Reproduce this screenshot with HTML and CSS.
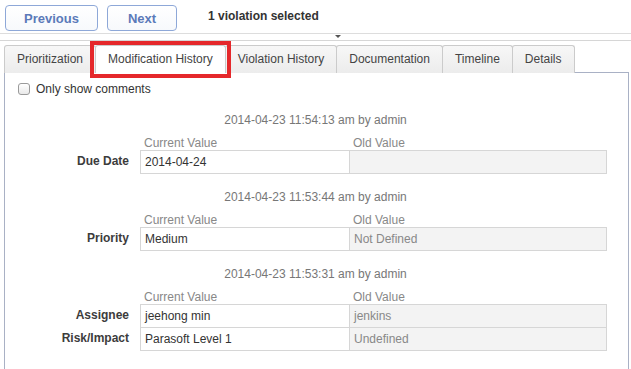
FILE: index.html
```html
<!DOCTYPE html>
<html>
<head>
<meta charset="utf-8">
<link rel="stylesheet" href="styles.css">
</head>
<body>
<div class="toolbar">
  <button class="btn btn-prev">Previous</button>
  <button class="btn btn-next">Next</button>
  <span class="selected">1 violation selected</span>
</div>
<div class="splitter"><span class="splitter-arrow"></span></div>
<div class="tabs-area">
  <div class="tabs">
    <div class="tab">Prioritization</div>
    <div class="tab active">Modification History</div>
    <div class="tab">Violation History</div>
    <div class="tab">Documentation</div>
    <div class="tab">Timeline</div>
    <div class="tab">Details</div>
  </div>
  <div class="highlight"></div>
  <div class="panel">
    <label class="filter"><input type="checkbox" class="check"><span>Only show comments</span></label>

    <div class="entry first">
      <div class="ts">2014-04-23 11:54:13 am by admin</div>
      <div class="head"><span class="h-cur">Current Value</span><span class="h-old">Old Value</span></div>
      <div class="row"><span class="lbl">Due Date</span><span class="cur">2014-04-24</span><span class="old"></span></div>
    </div>

    <div class="entry">
      <div class="ts">2014-04-23 11:53:44 am by admin</div>
      <div class="head"><span class="h-cur">Current Value</span><span class="h-old">Old Value</span></div>
      <div class="row"><span class="lbl">Priority</span><span class="cur">Medium</span><span class="old">Not Defined</span></div>
    </div>

    <div class="entry">
      <div class="ts">2014-04-23 11:53:31 am by admin</div>
      <div class="head"><span class="h-cur">Current Value</span><span class="h-old">Old Value</span></div>
      <div class="row"><span class="lbl">Assignee</span><span class="cur">jeehong min</span><span class="old">jenkins</span></div>
      <div class="row"><span class="lbl">Risk/Impact</span><span class="cur">Parasoft Level 1</span><span class="old">Undefined</span></div>
    </div>
  </div>
</div>
</body>
</html>
```

FILE: styles.css
```css
* { box-sizing: border-box; }
html, body { margin: 0; padding: 0; background: #fff; }
body {
  font-family: "Liberation Sans", Arial, Helvetica, sans-serif;
  font-size: 12px;
  color: #333;
  overflow: hidden;
}

.toolbar {
  display: flex;
  align-items: flex-start;
  padding: 5px 0 0 5px;
  height: 31px;
}
.btn {
  height: 26px;
  border: 1px solid #8ea8d8;
  border-radius: 4px;
  background: linear-gradient(#ffffff, #f7f9fc);
  color: #5b7ab9;
  font-family: "Liberation Sans", Arial, Helvetica, sans-serif;
  font-weight: bold;
  font-size: 13px;
  padding: 0;
  margin: 0;
}
.btn-prev { width: 93px; }
.btn-next { width: 70px; margin-left: 9px; }
.selected {
  margin-left: 31px;
  margin-top: 4px;
  font-weight: bold;
  color: #333;
  line-height: 14px;
}

.splitter {
  margin-top: 2px;
  height: 8px;
  border-top: 1px solid #dddddd;
  border-bottom: 1px solid #d6d6d6;
  padding-left: 335px;
}
.splitter-arrow {
  display: block;
  width: 0;
  height: 0;
  margin-top: 1px;
  border-left: 3px solid transparent;
  border-right: 3px solid transparent;
  border-top: 3px solid #555;
}

.tabs-area {
  position: relative;
  margin-top: 4px;
  padding-left: 4px;
  padding-right: 2px;
}
.tabs {
  display: flex;
  height: 27px;
  position: relative;
  z-index: 1;
}
.tab {
  height: 28px;
  line-height: 26px;
  padding: 0 12px;
  border: 1px solid #cbcbcb;
  border-bottom: none;
  border-radius: 3px 3px 0 0;
  background: linear-gradient(#f7f7f7, #ececec);
  color: #444;
  margin-right: -1px;
  white-space: nowrap;
}
.tab.active {
  background: #fff;
  padding: 0 12px;
  height: 28px;
}

.highlight {
  position: absolute;
  left: 90px;
  top: -4px;
  width: 141px;
  height: 37px;
  border: 4px solid #e5282b;
  z-index: 2;
}

.panel {
  border: 1px solid #a9b1c5;
  border-bottom: none;
  padding: 10px 0 40px 0;
}

.filter {
  display: flex;
  align-items: center;
  margin-left: 13px;
  height: 12px;
  color: #333;
}
.check {
  appearance: none;
  -webkit-appearance: none;
  width: 12px;
  height: 12px;
  margin: 0 6px 0 0;
  border: 1px solid #9a9a9a;
  border-radius: 3px;
  background: linear-gradient(#ffffff, #e9e9e9);
}

.entry { padding-top: 16px; }
.entry.first { padding-top: 18px; }
.ts {
  text-align: center;
  color: #777;
  line-height: 14px;
  padding-right: 2px;
}
.head {
  display: flex;
  margin-top: 9px;
  padding-left: 135px;
  line-height: 14px;
  color: #888;
}
.h-cur { width: 209px; padding-left: 4px; }
.h-old { padding-left: 4px; }

.row {
  display: flex;
  height: 24px;
  line-height: 22px;
}
.row + .row { margin-top: -1px; }
.lbl {
  width: 124px;
  margin-right: 11px;
  text-align: right;
  font-weight: bold;
  color: #3c3c3c;
}
.cur {
  width: 209px;
  border: 1px solid #d6d6d6;
  border-right: none;
  padding-left: 4px;
  color: #333;
  background: #fff;
}
.old {
  width: 258px;
  border: 1px solid #d6d6d6;
  background: #f3f3f3;
  padding-left: 4px;
  color: #888;
}
```
